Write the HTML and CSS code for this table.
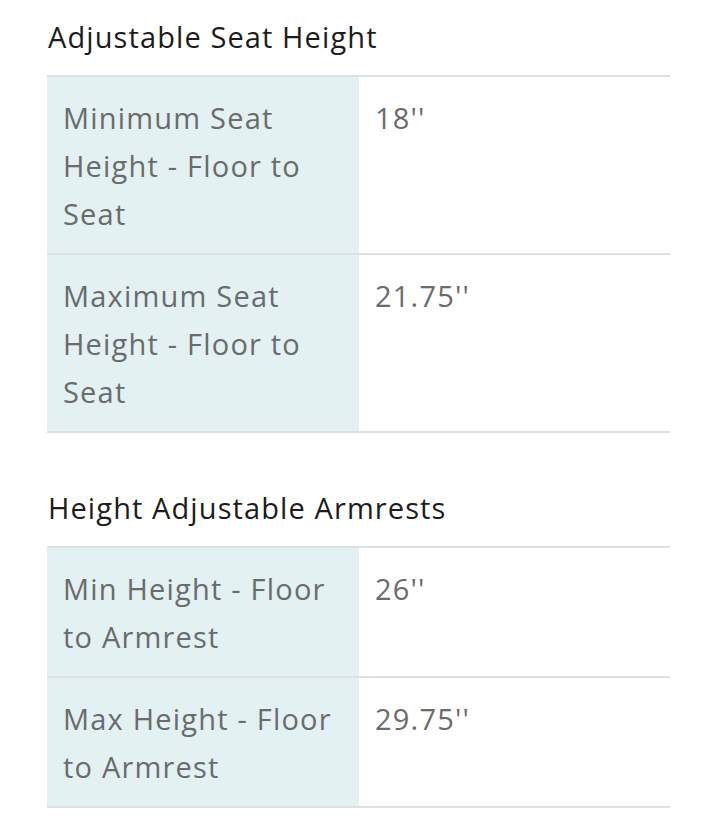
FILE: index.html
```html
<!DOCTYPE html>
<html>
<head>
<meta charset="utf-8">
<link rel="stylesheet" href="styles.css">
</head>
<body>
<div class="specs">
  <section class="group">
    <h2 class="group-title">Adjustable Seat Height</h2>
    <div class="table">
      <div class="row">
        <div class="label">Minimum Seat Height - Floor to Seat</div>
        <div class="value">18''</div>
      </div>
      <div class="row">
        <div class="label">Maximum Seat Height - Floor to Seat</div>
        <div class="value">21.75''</div>
      </div>
    </div>
  </section>
  <section class="group">
    <h2 class="group-title">Height Adjustable Armrests</h2>
    <div class="table">
      <div class="row">
        <div class="label">Min Height - Floor to Armrest</div>
        <div class="value">26''</div>
      </div>
      <div class="row">
        <div class="label">Max Height - Floor to Armrest</div>
        <div class="value">29.75''</div>
      </div>
    </div>
  </section>
</div>
</body>
</html>
```
FILE: styles.css
```css
html, body {
  margin: 0;
  padding: 0;
  background: #ffffff;
}
body {
  font-family: "Open Sans", "Noto Sans", sans-serif;
}
.specs {
  width: 623px;
  margin-left: 47px;
  padding-top: 17px;
}
.group + .group {
  margin-top: 55px;
}
.group-title {
  margin: 0 0 18px 1px;
  font-size: 29px;
  line-height: 40px;
  font-weight: 400;
  letter-spacing: 1.1px;
  color: #1c1c1c;
}
.table {
  border-top: 2px solid #dde1e2;
}
.row {
  display: grid;
  grid-template-columns: 312px 1fr;
  border-bottom: 2px solid #dde1e2;
}
.label {
  background: #e3f1f3;
  padding: 17px 16px 15px 16px;
  font-size: 29px;
  line-height: 48px;
  letter-spacing: 1.2px;
  color: #6a6b6b;
}
.value {
  padding: 17px 16px 15px 16px;
  font-size: 29px;
  line-height: 48px;
  letter-spacing: 1.2px;
  color: #6a6b6b;
}
```
